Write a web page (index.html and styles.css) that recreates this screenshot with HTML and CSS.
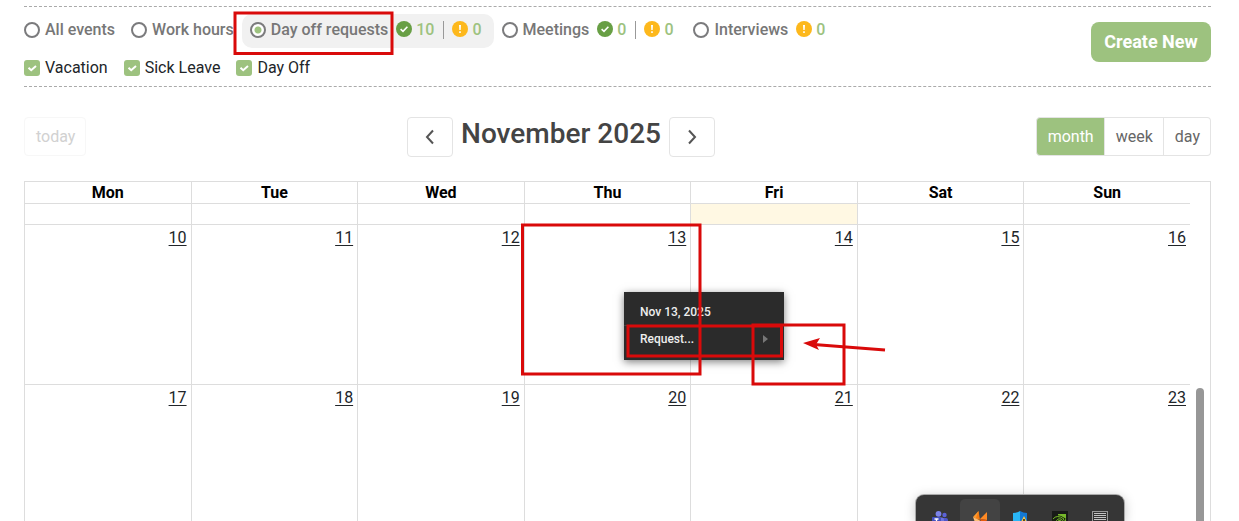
FILE: index.html
```html
<!DOCTYPE html>
<html lang="en">
<head>
<meta charset="utf-8">
<title>Calendar</title>
<link rel="stylesheet" href="styles.css">
</head>
<body>
<svg class="defs" aria-hidden="true">
  <symbol id="ok" viewBox="0 0 16 16"><circle cx="8" cy="8" r="8" fill="#689f45"/><path d="M4.600 8.200l2.400 2.200L11.400 5.800" fill="none" stroke="#fff" stroke-width="1.600"/></symbol>
  <symbol id="warn" viewBox="0 0 16 16"><circle cx="8" cy="8" r="8" fill="#fdb81c"/><path d="M7 4h2l-.3 5H7.3zM7.2 10.3h1.6v1.6H7.2z" fill="#fff"/></symbol>
</svg>
<main class="page">
  <section class="filters">
    <div class="filter-rows">
      <div class="types">
        <label class="type"><input type="radio" name="type">All events</label>
        <label class="type"><input type="radio" name="type">Work hours</label>
        <label class="type active"><input type="radio" name="type" checked>Day off requests
          <span class="counts"><svg><use href="#ok"/></svg><span class="num">10</span><i class="sep"></i><svg><use href="#warn"/></svg><span class="num">0</span></span></label>
        <label class="type"><input type="radio" name="type">Meetings
          <span class="counts"><svg><use href="#ok"/></svg><span class="num">0</span><i class="sep"></i><svg><use href="#warn"/></svg><span class="num">0</span></span></label>
        <label class="type"><input type="radio" name="type">Interviews
          <span class="counts"><svg><use href="#warn"/></svg><span class="num">0</span></span></label>
      </div>
      <div class="kinds">
        <label class="kind"><span class="tick"><input type="checkbox" checked><svg viewBox="0 0 16 16"><path d="M4.500 7.800l2.700 2.400L12 6"/></svg></span>Vacation</label>
        <label class="kind"><span class="tick"><input type="checkbox" checked><svg viewBox="0 0 16 16"><path d="M4.500 7.800l2.700 2.400L12 6"/></svg></span>Sick Leave</label>
        <label class="kind"><span class="tick"><input type="checkbox" checked><svg viewBox="0 0 16 16"><path d="M4.500 7.800l2.700 2.400L12 6"/></svg></span>Day Off</label>
      </div>
    </div>
    <button class="create">Create New</button>
  </section>

  <header class="toolbar">
    <button class="btn" disabled>today</button>
    <div class="period">
      <button class="btn nav" aria-label="Previous"><svg viewBox="0 0 16 16"><path d="M11 1.500L5 8l6 6.500"/></svg></button>
      <h1>November 2025</h1>
      <button class="btn nav" aria-label="Next"><svg viewBox="0 0 16 16"><path d="M5 1.500L11 8l-6 6.500"/></svg></button>
    </div>
    <div class="views">
      <button class="btn on">month</button><button class="btn">week</button><button class="btn">day</button>
    </div>
  </header>

  <div class="calendar">
    <div class="grid">
      <table>
        <thead><tr><th>Mon</th><th>Tue</th><th>Wed</th><th>Thu</th><th>Fri</th><th>Sat</th><th>Sun</th></tr></thead>
        <tbody>
          <tr class="past"><td></td><td></td><td></td><td></td><td class="today"></td><td></td><td></td></tr>
          <tr class="week"><td><a href="#">10</a></td><td><a href="#">11</a></td><td><a href="#">12</a></td><td><a href="#">13</a></td><td><a href="#">14</a></td><td><a href="#">15</a></td><td><a href="#">16</a></td></tr>
          <tr class="week"><td><a href="#">17</a></td><td><a href="#">18</a></td><td><a href="#">19</a></td><td><a href="#">20</a></td><td><a href="#">21</a></td><td><a href="#">22</a></td><td><a href="#">23</a></td></tr>
        </tbody>
      </table>
    </div>
    <div class="gutter"><div class="thumb"></div></div>
  </div>
</main>

<div class="menu">
  <div class="menu-title">Nov 13, 2025</div>
  <button class="menu-item">Request...<svg viewBox="0 0 6 8"><path d="M0 0l5 4-5 4z"/></svg></button>
</div>

<div class="tray">
  <span class="app"><svg viewBox="0 0 20 20"><circle cx="14.500" cy="5" r="2.200" fill="#5b62d6"/><rect x="11" y="8" width="7" height="9" rx="2" fill="#4f55c9"/><circle cx="8.500" cy="3.800" r="2.900" fill="#7b83eb"/><rect x="5" y="7.500" width="9" height="11" rx="2" fill="#6c74e0"/><rect x="2" y="7" width="9" height="9" rx="1" fill="#4450bf"/><path d="M4.500 9h4M6.500 9v5" stroke="#fff" stroke-width="1.300"/></svg></span>
  <span class="app current"><svg viewBox="0 0 20 20"><path d="M8.500 1v9L3 7z" fill="#ff9a2c"/><path d="M3 7l7 3.500-3 7z" fill="#ffc078"/><path d="M8.500 1l1.500 9-4-2z" fill="#f57c13"/><path d="M17 2v8l-7-1z" fill="#ff8a24"/><path d="M10 9l7 1-4 8z" fill="#e95b0c"/></svg></span>
  <span class="app"><svg viewBox="0 0 20 20"><path d="M10 1q-3 2-7 2v7q0 6 7 9z" fill="#29b6f6"/><path d="M10 1q3 2 7 2v7q0 6-7 9z" fill="#1479d4"/><path d="M14 6l5 10H9z" fill="#ffc83d"/><path d="M14 9v4" stroke="#222" stroke-width="1.500"/></svg></span>
  <span class="app"><svg viewBox="0 0 20 20"><path d="M2 1h16v18H2z" fill="#181a18"/><path d="M8 4h8v11H8z" fill="#76b82a"/><path d="M3 9q4-5 11 0-4 6-8 3 1-4 5-3M3 9q2 5 6 6" fill="none" stroke="#17200f" stroke-width="2.500"/><path d="M3 9q4-5 11 0-4 6-8 3 1-4 5-3" fill="none" stroke="#76b82a"/></svg></span>
  <span class="app"><svg viewBox="0 0 20 20"><path d="M2 1h16v18H2z" fill="#999"/><path d="M3 2h14v16H3z" fill="#333"/><path d="M4 3.500h12M4 5.500h12M4 7.500h12M4 9.500h12M4 11.500h12" stroke="#c4c4c4"/></svg></span>
</div>

<svg class="marks" aria-hidden="true">
  <g fill="none" stroke="#d90a0a" stroke-width="3">
    <path d="M235 13H392V53.500H235z"/>
    <path d="M522.500 225H700V374H522.500z"/>
    <path d="M628 326H781.500V356H628z"/>
    <path d="M753 325H844V384H753z"/>
    <path d="M814 344.500L885 350"/>
  </g>
  <path d="M803 343l17-5-4 6.500 3 5.500z" fill="#d90a0a"/>
</svg>
</body>
</html>
```
FILE: styles.css
```css
* { box-sizing: border-box; }
html, body { height: 100%; }
body {
  position: relative;
  margin: 0;
  overflow: hidden;
  background: #fff;
  color: #212529;
  font: 16px/24px Roboto, "Liberation Sans", sans-serif;
}
button { font: inherit; cursor: pointer; }
.defs { position: absolute; width: 0; height: 0; }
.page {
  display: flex;
  flex-direction: column;
  height: 100%;
  padding: 6px 28px 0 24px;
}

.filters {
  display: flex;
  flex: none;
  justify-content: space-between;
  align-items: flex-start;
  padding: 7px 0 6px;
  border-top: 1px dashed #aaa;
  border-bottom: 1px dashed #aaa;
}
.types { display: flex; margin-left: -8px; }
.type {
  display: flex;
  align-items: center;
  height: 34px;
  padding: 0 8px 2px;
  border-radius: 10px;
  color: #777;
  font-weight: 500;
}
.type.active { background: #f1f1f1; }
.type input {
  appearance: none;
  flex: none;
  width: 16px;
  height: 16px;
  margin: 0 5px 0 0;
  border: 2px solid #7b7b7d;
  border-radius: 50%;
  background: #fff;
}
.type input:checked { background: radial-gradient(circle, #9dc27f 3px, #fff 4px); }
.counts { display: flex; align-items: center; margin: 0 4px 0 8px; }
.counts svg { width: 16px; height: 16px; margin-bottom: 2px; }
.num { margin-left: 4px; color: #9dc27f; }
.sep { width: 1px; height: 18px; margin: 0 8px 0 9px; background: #999; }
.kinds { display: flex; gap: 16px; padding-top: 8px; }
.kind { display: flex; align-items: center; }
.tick { position: relative; display: flex; margin-right: 5px; }
.tick input {
  appearance: none;
  width: 16px;
  height: 16px;
  margin: 0;
  border-radius: 3px;
  background: #9dc27f;
}
.tick svg { position: absolute; inset: 0; fill: none; stroke: #fff; stroke-width: 2; }
.create {
  min-width: 120px;
  height: 40px;
  margin-top: 8px;
  padding: 0 13px;
  border: 0;
  border-radius: 8px;
  background: #9dc27f;
  color: #fff;
  font-size: 18px;
  font-weight: 700;
}

.toolbar {
  display: flex;
  flex: none;
  justify-content: space-between;
  align-items: flex-start;
  padding: 30px 0 24px;
}
.btn {
  height: 39px;
  padding: 0 10px 0 11px;
  border: 1px solid #e4e4e4;
  border-radius: 4px;
  background: #fff;
  color: #666;
}
.btn:disabled { border-color: #f7f7f7; color: #d1d1d1; }
.period { display: flex; align-items: flex-start; gap: 8px; }
.nav { display: flex; align-items: center; height: 40px; padding: 0 14px; }
.nav svg { width: 16px; height: 16px; fill: none; stroke: #555; stroke-width: 2; }
h1 { margin: 0; color: #444; font-size: 28px; line-height: 34px; font-weight: 500; }
.views { display: flex; }
.views .btn { border-radius: 0; }
.views .btn + .btn { border-left: 0; }
.views .btn:first-child { border-radius: 4px 0 0 4px; }
.views .btn:last-child { border-radius: 0 4px 4px 0; }
.views .on { background: #9dc27f; color: #fff; }

.calendar {
  display: flex;
  flex: 1;
  min-height: 0;
  overflow: hidden;
  border-top: 1px solid #ddd;
  border-right: 1px solid #ddd;
}
.grid { flex: 1; }
table { width: 100%; table-layout: fixed; border-collapse: separate; border-spacing: 0; }
th, td { border-left: 1px solid #ddd; border-bottom: 1px solid #ddd; }
th { height: 22px; padding: 0; color: #000; line-height: 21px; font-weight: 700; }
td { padding: 0 4px; vertical-align: top; text-align: right; }
.past td { height: 21px; }
.week td { height: 160px; padding-top: 1px; }
.today { background: #fff8e3; }
td a { color: #212529; text-underline-offset: 2px; }
.gutter { display: flex; width: 20px; padding: 206px 6px 0; }
.thumb { flex: 1; border-radius: 4px 4px 0 0; background: #979797; }

.menu {
  position: absolute;
  left: 624px;
  top: 292px;
  width: 160px;
  padding: 7px 0 8px;
  background: #2b2b2b;
  box-shadow: 0 2px 8px rgba(0, 0, 0, .5);
  color: #eee;
  font-size: 12px;
  line-height: 26px;
  font-weight: 500;
}
.menu-title { padding: 0 16px; }
.menu-item {
  display: flex;
  justify-content: space-between;
  align-items: center;
  width: 100%;
  padding: 0 15px 0 16px;
  border: 0;
  border-top: 1px solid #444;
  background: none;
  color: inherit;
}
.menu-item svg { width: 6px; height: 8px; fill: #777; }

.tray {
  position: absolute;
  left: 916px;
  bottom: 0;
  display: flex;
  width: 208px;
  height: 26px;
  padding: 4px 4px 0;
  border-radius: 8px 8px 0 0;
  background: #363636;
  box-shadow: 0 0 0 1px #aaa, 0 2px 12px rgba(0, 0, 0, .25);
}
.app {
  flex: 1;
  display: flex;
  justify-content: center;
  overflow: hidden;
  padding-top: 11px;
  border-radius: 5px 5px 0 0;
}
.app svg { flex: none; width: 20px; height: 20px; }
.current { background: #434343; }

.marks { position: absolute; left: 0; top: 0; width: 100%; height: 100%; pointer-events: none; }
```
